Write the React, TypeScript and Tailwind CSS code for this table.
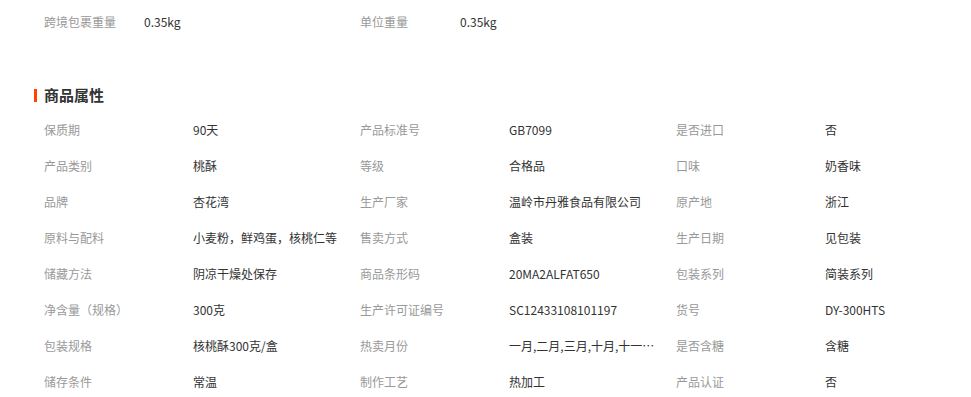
import React from 'react';

const TOP = [
  ['跨境包裹重量', '0.35kg'],
  ['单位重量', '0.35kg'],
];

const ATTRS: [string, string][] = [
  ['保质期', '90天'],
  ['产品标准号', 'GB7099'],
  ['是否进口', '否'],
  ['产品类别', '桃酥'],
  ['等级', '合格品'],
  ['口味', '奶香味'],
  ['品牌', '杏花湾'],
  ['生产厂家', '温岭市丹雅食品有限公司'],
  ['原产地', '浙江'],
  ['原料与配料', '小麦粉，鲜鸡蛋，核桃仁等'],
  ['售卖方式', '盒装'],
  ['生产日期', '见包装'],
  ['储藏方法', '阴凉干燥处保存'],
  ['商品条形码', '20MA2ALFAT650'],
  ['包装系列', '简装系列'],
  ['净含量（规格）', '300克'],
  ['生产许可证编号', 'SC12433108101197'],
  ['货号', 'DY-300HTS'],
  ['包装规格', '核桃酥300克/盒'],
  ['热卖月份', '一月,二月,三月,十月,十一月,十二月'],
  ['是否含糖', '含糖'],
  ['储存条件', '常温'],
  ['制作工艺', '热加工'],
  ['产品认证', '否'],
];

const App: React.FC = () => {
  return (
    <div
      className="w-[971px] h-[397px] bg-white overflow-hidden text-[12px] pt-[4px]"
      style={{ fontFamily: '"Noto Sans CJK SC", "Microsoft YaHei", sans-serif' }}
    >
      {/* weight row */}
      <div className="flex pl-[44px] h-[36px] items-center">
        {TOP.map(([label, value]) => (
          <div key={label} className="flex w-[316px]">
            <span className="w-[100px] text-[#999]">{label}</span>
            <span className="text-[#333]">{value}</span>
          </div>
        ))}
      </div>

      {/* section title */}
      <div className="mt-[45px] ml-[34px] flex items-center h-[20px]">
        <span className="w-[3px] h-[13px] bg-[#ff4400] mr-[7px]" />
        <span className="text-[15px] font-bold text-[#333]">商品属性</span>
      </div>

      {/* attributes */}
      <div className="mt-[7px] pl-[44px] grid grid-cols-[316px_316px_316px]">
        {ATTRS.map(([label, value]) => (
          <div key={label} className="flex items-center h-[36px]">
            <span className="w-[149px] shrink-0 text-[#999]">{label}</span>
            <span className="w-[150px] truncate text-[#333]">{value}</span>
          </div>
        ))}
      </div>
    </div>
  );
};

export default App;
